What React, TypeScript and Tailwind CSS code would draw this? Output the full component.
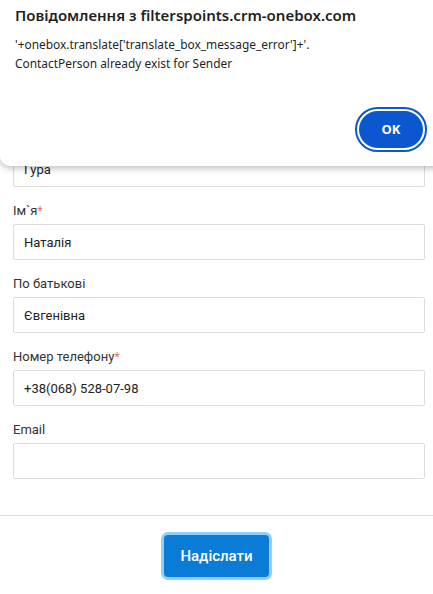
import React from "react"

type Field = { label: string; value: string; required?: boolean }

const fields: Field[] = [
  { label: "Прізвище", value: "Гура", required: true },
  { label: "Ім`я", value: "Наталія", required: true },
  { label: "По батькові", value: "Євгенівна" },
  { label: "Номер телефону", value: "+38(068) 528-07-98", required: true },
  { label: "Email", value: "" },
]

function AlertDialog() {
  return (
    <div className="absolute top-0 left-0 -right-[12px] h-[166px] rounded-b-[10px] bg-white shadow-[0_2px_7px_rgba(0,0,0,0.28)] font-['Noto_Sans',sans-serif] text-[#1f1f1f]">
      <div className="px-[15px] pt-[4px]">
        <h2 className="text-[15px] font-semibold leading-[22px]">
          Повідомлення з filterspoints.crm-onebox.com
        </h2>
        <p className="mt-[9px] text-[11.9px] leading-[19px]">
          '+onebox.translate['translate_box_message_error']+'.
          <br />
          ContactPerson already exist for Sender
        </p>
      </div>
      <div className="absolute left-[355px] top-[107px] flex h-[45px] w-[72px] items-center justify-center rounded-full border-2 border-[#0b57d0] p-[2px]">
        <button className="h-full w-full rounded-full bg-[#0b57d0] text-[13px] font-bold text-white">
          OK
        </button>
      </div>
    </div>
  )
}

export default function App() {
  return (
    <div className="relative min-h-[594px] w-full overflow-hidden bg-white font-['Roboto',sans-serif]">
      <form className="flex flex-col gap-[16px] pl-[13px] pr-[8px] pt-[130px]">
        {fields.map((f) => (
          <div key={f.label} className="flex flex-col">
            <label className="mb-[5px] text-[13px] leading-[16px] text-[#333]">
              {f.label}
              {f.required && <span className="text-[#e57373]">*</span>}
            </label>
            <input
              readOnly
              value={f.value}
              className="h-[36px] w-full rounded-[2px] border border-[#dcdcdc] bg-white px-[10px] text-[13px] text-[#222] outline-none"
            />
          </div>
        ))}
      </form>
      <div className="mt-[36px] border-t border-[#dedede]" />
      <div className="flex justify-center pt-[16px]">
        <div className="rounded-[7px] bg-[#90cff9] p-[3px]">
          <button className="h-[42px] w-[105px] rounded-[4px] bg-[#0a7bd7] text-[15px] font-medium text-white">
            Надіслати
          </button>
        </div>
      </div>
      <AlertDialog />
    </div>
  )
}
